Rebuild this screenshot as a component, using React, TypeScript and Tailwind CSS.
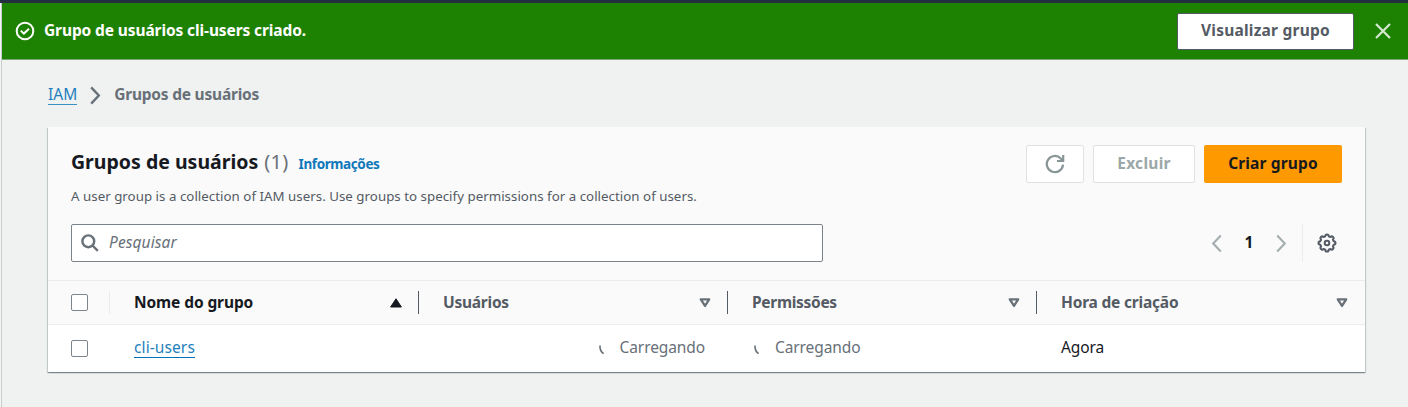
import type { ReactNode } from 'react';

function ChevronIcon({ left, className }: { left?: boolean; className: string }) {
  return (
    <svg viewBox="0 0 12 20" fill="none" stroke="currentColor" className={className}>
      <path d={left ? 'M10 1.500 2 10l8 8.500' : 'm2 1.500 8 8.500-8 8.500'} />
    </svg>
  );
}

function SortIcon({ active }: { active?: boolean }) {
  return active ? (
    <svg viewBox="0 0 12 10" className="h-[10px] w-3 shrink-0 text-[#16191f]">
      <path d="M6 .8 11.400 9H.6z" fill="currentColor" stroke="currentColor" strokeWidth="1" strokeLinejoin="round" />
    </svg>
  ) : (
    <svg viewBox="0 0 12 10" className="h-[10px] w-3 shrink-0 text-[#687078]">
      <path d="M1.800 1.300h8.400L6 7.800z" fill="none" stroke="currentColor" strokeWidth="2.300" strokeLinejoin="round" />
    </svg>
  );
}

function HeaderCell({ children, active, last }: { children: ReactNode; active?: boolean; last?: boolean }) {
  return (
    <div className="flex h-full items-center justify-between pl-6">
      {children}
      <div className="flex items-center">
        <SortIcon active={active} />
        {!last && <span className="ml-[16px] h-[23px] w-px bg-[#545b64]" />}
      </div>
    </div>
  );
}

function Checkbox() {
  return <span role="checkbox" aria-checked="false" className="block size-[17px] rounded-[2px] border border-[#7d848a] bg-white" />;
}

function Loading() {
  return (
    <span className="flex items-center text-[#687078]">
      <svg viewBox="0 0 8 12" fill="none" stroke="currentColor" strokeWidth="1.600" className="mt-[3px] mr-[14px] h-3 w-2">
        <path d="M2 1.500c-.3 3.500.8 6.200 3.600 8.200" />
      </svg>
      <span className="text-[15.500px] tracking-[-0.1px]">Carregando</span>
    </span>
  );
}

export default function App() {
  return (
    <div className="flex h-[407px] w-[1408px] flex-col overflow-hidden bg-[#f0f2f2] font-['Noto_Sans','Open_Sans',sans-serif] text-[15.500px] text-[#16191f]">
      <div className="h-[3px] shrink-0 bg-[#232f3e]" />
      <div className="flex min-h-0 flex-1">
        <div className="w-[2px] shrink-0 border-r border-[#c9cccc] bg-[#f5f6f6]" />
        <main className="flex min-w-0 flex-1 flex-col">
          <div className="flex h-[57px] shrink-0 items-center border-b border-[#7ba872] bg-[#1d8102] pr-[16px] pl-[13px] text-white">
            <svg viewBox="0 0 20 20" fill="none" stroke="currentColor" strokeWidth="2" className="size-5">
              <circle cx="10" cy="10" r="8.300" />
              <path d="m5.800 9.600 3.100 3 5.100-4.800" />
            </svg>
            <span className="ml-[9px] text-[15.500px] font-bold tracking-[-0.11px] whitespace-nowrap">Grupo de usuários cli-users criado.</span>
            <button className="ml-auto flex h-[37px] w-[177px] items-center justify-center rounded-[2px] border border-[#545b64] bg-white pb-px text-[15.500px] font-bold tracking-[0.23px] text-[#545b64]">
              <span>Visualizar grupo</span>
            </button>
            <svg viewBox="0 0 18 18" fill="none" stroke="currentColor" strokeWidth="2.200" className="ml-[20px] size-[18px] text-[#d5e8d0]">
              <path d="m2 2 14 14M16 2 2 16" />
            </svg>
          </div>

          <nav className="mt-[23px] ml-[46px] flex h-[24px] shrink-0 items-center">
            <a className="border-b border-[#3b8fc4] text-[15.500px] leading-[19px] text-[#1f7fbd]">IAM</a>
            <ChevronIcon className="mr-[13px] ml-[12px] h-[19px] w-[12px] stroke-[2.500] text-[#687078]" />
            <span className="text-[15.500px] font-bold tracking-[-0.22px] text-[#687078]">Grupos de usuários</span>
          </nav>

          <section className="mt-[20px] ml-[46px] flex h-[245px] w-[1317px] shrink-0 flex-col bg-white shadow-[0_1px_1px_0_rgba(0,28,36,0.300),1px_1px_1px_0_rgba(0,28,36,0.150),-1px_1px_1px_0_rgba(0,28,36,0.150)]">
            <div className="flex h-[153px] shrink-0 flex-col bg-[#fafafa] pr-[23px] pl-[23px]">
              <div className="flex h-[80px] justify-between pt-[18px]">
                <div>
                  <div className="flex h-[34px] items-baseline">
                    <h1 className="text-[19.500px] leading-[34px] font-bold">Grupos de usuários</h1>
                    <span className="ml-[6px] text-[20px] tracking-[0.3px] text-[#687078]">(1)</span>
                    <a className="ml-[10px] text-[13.500px] font-bold tracking-[-0.4px] text-[#0f78bb]">Informações</a>
                  </div>
                  <p className="mt-[7px] text-[13.300px] leading-[20px] tracking-[0.025px] text-[#545b64]">
                    A user group is a collection of IAM users. Use groups to specify permissions for a collection of users.
                  </p>
                </div>
                <div className="flex gap-[9px]">
                  <button className="flex h-[38px] w-[58px] items-center justify-center rounded-[2px] border border-[#dfe3e4] bg-white pr-px text-[#879596]">
                    <svg viewBox="0 0 20 20" fill="none" stroke="currentColor" strokeWidth="2.200" className="size-5">
                      <path d="M18 10.600a8.100 8.100 0 1 1-2.300-6.200L17.600 6.300" />
                      <path d="M18.200 1v6h-6.200" />
                    </svg>
                  </button>
                  <button className="flex h-[38px] w-[102px] items-center justify-center rounded-[2px] border border-[#dfe3e4] bg-white text-[15.500px] font-bold tracking-[0.3px] text-[#9ba7a8]">
                    <span>Excluir</span>
                  </button>
                  <button className="flex h-[38px] w-[138px] items-center justify-center rounded-[2px] bg-[#ff9900] text-[15.500px] font-bold tracking-[0.15px] text-[#16191f]">
                    <span>Criar grupo</span>
                  </button>
                </div>
              </div>
              <div className="mt-[17px] flex h-[38px] items-center justify-between">
                <div className="flex h-[38px] w-[752px] items-center rounded-[2px] border border-[#7d8489] bg-white pl-[9px] text-[#687078]">
                  <svg viewBox="0 0 18 18" fill="none" stroke="currentColor" strokeWidth="2.400" className="size-[18px]">
                    <circle cx="7.300" cy="7.300" r="5.900" />
                    <path d="m11.500 11.500 5.300 5.300" />
                  </svg>
                  <span className="ml-[10px] text-[15.500px] tracking-[0.1px] italic">Pesquisar</span>
                </div>
                <div className="flex items-center">
                  <ChevronIcon left className="h-[19px] w-[12px] stroke-[2.200] text-[#a3adae]" />
                  <span className="w-[52px] text-center text-[15.500px] font-bold">1</span>
                  <ChevronIcon className="h-[19px] w-[12px] stroke-[2.200] text-[#a3adae]" />
                  <span className="mr-[14px] ml-[15px] h-[38px] w-px bg-[#eaeded]" />
                  <svg viewBox="0 0 20 20" fill="none" stroke="currentColor" strokeWidth="2" strokeLinejoin="round" className="mr-[5px] size-5 text-[#545b64]">
                    <path d="M8.200 3.400Q8.300 1.500 10 1.500T11.800 3.400L13.400 4.100Q14.800 2.800 16 4T15.900 6.600L16.600 8.200Q18.500 8.300 18.500 10T16.600 11.800L15.900 13.400Q17.200 14.800 16 16T13.400 15.900L11.800 16.600Q11.700 18.500 10 18.500T8.200 16.600L6.600 15.900Q5.200 17.200 4 16T4.100 13.400L3.400 11.800Q1.500 11.700 1.500 10T3.400 8.200L4.100 6.600Q2.800 5.200 4 4T6.600 4.100Z" />
                    <circle cx="10" cy="10" r="2.300" />
                  </svg>
                </div>
              </div>
            </div>
            <div className="grid h-[45px] shrink-0 grid-cols-[62px_309px_309px_309px_328px] items-center border-y border-[#eaeded] bg-[#fafafa] text-[15.500px] font-bold text-[#545b64]">
              <div className="flex items-center justify-between pl-[23px]">
                <Checkbox />
                <span className="h-[23px] w-px bg-[#eaeded]" />
              </div>
              <HeaderCell active><span className="tracking-[-0.1px] text-[#16191f]">Nome do grupo</span></HeaderCell>
              <HeaderCell><span className="tracking-[-0.25px]">Usuários</span></HeaderCell>
              <HeaderCell><span className="tracking-[-0.3px]">Permissões</span></HeaderCell>
              <div className="pr-[17px]"><HeaderCell last><span className="tracking-[-0.2px]">Hora de criação</span></HeaderCell></div>
            </div>
            <div className="grid flex-1 grid-cols-[62px_309px_309px_309px_328px] items-center pb-px">
              <div className="pl-[23px]"><Checkbox /></div>
              <div className="flex pl-6">
                <a className="border-b border-[#0073bb] text-[15.500px] leading-[19px] tracking-[0.1px] text-[#1f7fbd]">cli-users</a>
              </div>
              <div className="flex justify-end pr-[23px]"><Loading /></div>
              <div className="flex pl-[25px]"><Loading /></div>
              <div className="pl-6"><span className="tracking-[-0.1px]">Agora</span></div>
            </div>
          </section>
        </main>
      </div>
    </div>
  );
}
